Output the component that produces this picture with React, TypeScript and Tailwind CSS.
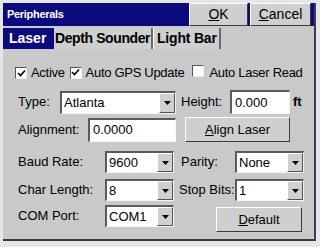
import React from 'react';

const font = "font-['Liberation_Sans',Arial,sans-serif]";

const Check = ({ checked }: { checked?: boolean }) => (
  <span className="inline-flex items-center justify-center w-[12px] h-[12px] bg-white border border-t-[#555] border-l-[#555] border-b-[#eee] border-r-[#eee] shrink-0">
    {checked && (
      <svg width="9" height="9" viewBox="0 0 9 9">
        <path d="M1 4 L3.5 6.5 L8 1.5" stroke="#000" strokeWidth="1.6" fill="none" />
      </svg>
    )}
  </span>
);

const Field = ({ value, w }: { value: string; w: string }) => (
  <div className={`${w} h-[24px] bg-white border-t-2 border-l-2 border-t-[#5a5a5a] border-l-[#5a5a5a] border-b border-r border-b-[#f4f4f4] border-r-[#f4f4f4] flex items-center pl-[3px] text-[13px]`}>
    {value}
  </div>
);

const Select = ({ value, w, h = 'h-[22px]' }: { value: string; w: string; h?: string }) => (
  <div className={`${w} ${h} bg-white border-t-2 border-l-2 border-t-[#5a5a5a] border-l-[#5a5a5a] border-b border-r border-b-[#f4f4f4] border-r-[#f4f4f4] flex items-center text-[13px]`}>
    <span className="flex-1 pl-[2px]">{value}</span>
    <span className="w-[16px] h-full bg-[#d0d0d0] border border-t-white border-l-white border-b-[#555] border-r-[#555] flex items-center justify-center">
      <svg width="7" height="4" viewBox="0 0 7 4">
        <path d="M0 0 H7 L3.5 4 Z" fill="#000" />
      </svg>
    </span>
  </div>
);

const Button = ({ children, w, h = 'h-[25px]' }: { children: React.ReactNode; w: string; h?: string }) => (
  <div className={`${w} ${h} bg-[#cfcfcf] border border-t-white border-l-white border-b-[#3a3a3a] border-r-[#3a3a3a] flex items-center justify-center text-[13px]`}>
    {children}
  </div>
);

export default function App() {
  return (
    <div className={`w-[320px] h-[247px] bg-[#e6e6e6] pt-[3px] pl-[3px] pr-[3px] pb-[3px] ${font} text-black`}>
      <div className="w-[313px] h-[238px] flex flex-col border-r-2 border-b-2 border-r-[#3c3c5a] border-b-[#3c3c3c] bg-[#c9c9c9]">
        {/* Title bar */}
        <div className="h-[23px] bg-[#0b0b7e] flex items-center">
          <span className="pl-[4px] text-white font-bold text-[11px] tracking-[-0.3px] flex-1">Peripherals</span>
          <Button w="w-[59px]" h="h-[23px]">
            <span className="text-[14px]"><u>O</u>K</span>
          </Button>
          <div className="w-[2px] h-full bg-[#0b0b7e]" />
          <Button w="w-[61px]" h="h-[23px]">
            <span className="text-[14px]"><u>C</u>ancel</span>
          </Button>
          <div className="w-[3px] h-full bg-[#0b0b7e]" />
        </div>
        {/* Tabs */}
        <div className="h-[21px] mt-[2px] flex items-stretch text-[14px] font-bold whitespace-nowrap">
          <div className="w-[51px] shrink-0 bg-[#0b0b7e] text-white flex items-center pl-[6px]">Laser</div>
          <div className="w-[99px] shrink-0 bg-[#cfcfcf] flex items-center pl-[1px] border-r-2 border-r-[#6a6a6a] tracking-[-0.4px]">Depth Sounder</div>
          <div className="w-[68px] shrink-0 bg-[#cfcfcf] flex items-center pl-[3px] border-l border-l-white border-r-2 border-r-[#6a6a6a] tracking-[-0.2px]">Light Bar</div>
        </div>
        {/* Panel */}
        <div className="flex-1 flex flex-col pl-[12px] pt-[15px] text-[13px]">
          <div className="h-[18px] flex items-center whitespace-nowrap tracking-[-0.3px]">
            <Check checked />
            <span className="ml-[4px]">Active</span>
            <span className="ml-[5px]"><Check checked /></span>
            <span className="ml-[4px]">Auto GPS Update</span>
            <span className="ml-[8px]"><Check /></span>
            <span className="ml-[5px]">Auto Laser Read</span>
          </div>
          <div className="mt-[8px] flex items-center pl-[3px]">
            <span className="w-[42px]">Type:</span>
            <Select value="Atlanta" w="w-[116px]" h="h-[23px]" />
            <span className="ml-[5px] w-[49px]">Height:</span>
            <Field value="0.000" w="w-[60px]" />
            <span className="ml-[3px] font-bold">ft</span>
          </div>
          <div className="mt-[3px] flex items-center pl-[3px]">
            <span className="w-[70px]">Alignment:</span>
            <Field value="0.0000" w="w-[88px]" />
            <div className="ml-[9px]">
              <Button w="w-[105px]"><span><u>A</u>lign Laser</span></Button>
            </div>
          </div>
          <div className="mt-[9px] flex items-center pl-[3px]">
            <span className="w-[87px]">Baud Rate:</span>
            <Select value="9600" w="w-[69px]" />
            <span className="ml-[7px] w-[54px]">Parity:</span>
            <Select value="None" w="w-[69px]" />
          </div>
          <div className="mt-[6px] flex items-center pl-[3px]">
            <span className="w-[87px]">Char Length:</span>
            <Select value="8" w="w-[69px]" />
            <span className="ml-[5px] w-[56px]">Stop Bits:</span>
            <Select value="1" w="w-[69px]" />
          </div>
          <div className="mt-[4px] flex items-start pl-[3px]">
            <span className="w-[87px] h-[22px] flex items-center">COM Port:</span>
            <Select value="COM1" w="w-[69px]" />
            <div className="ml-[42px] mt-[2px]">
              <Button w="w-[86px]"><span><u>D</u>efault</span></Button>
            </div>
          </div>
        </div>
      </div>
    </div>
  );
}
